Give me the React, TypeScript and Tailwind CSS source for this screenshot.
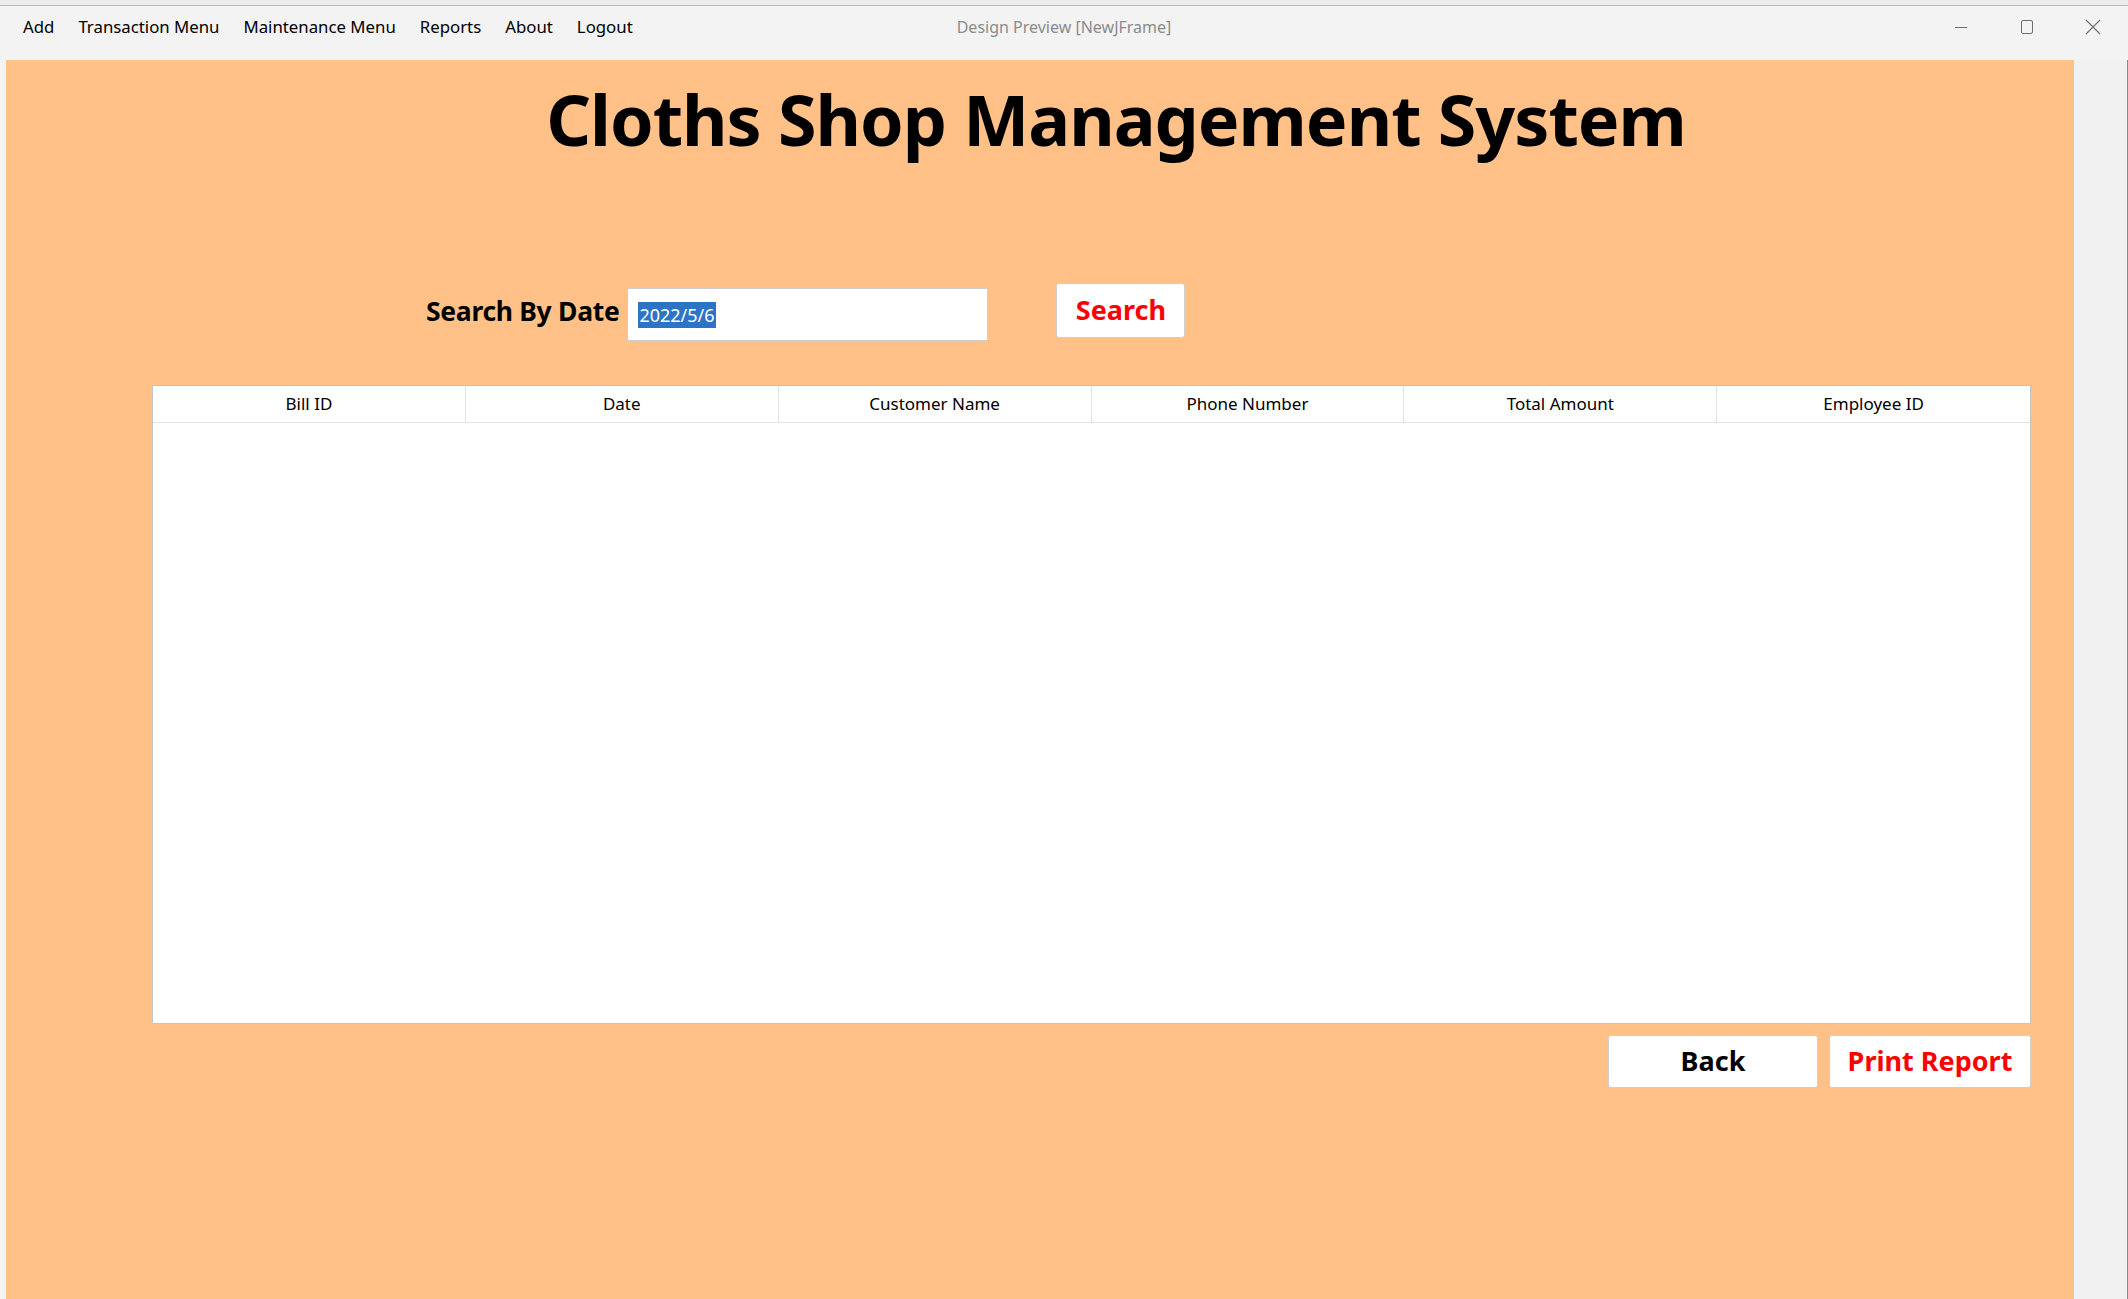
import React from 'react';

const menuItems = ['Add', 'Transaction Menu', 'Maintenance Menu', 'Reports', 'About', 'Logout'];
const columns = ['Bill ID', 'Date', 'Customer Name', 'Phone Number', 'Total Amount', 'Employee ID'];

const font = { fontFamily: '"Noto Sans", "Open Sans", Arial, sans-serif' };

export default function App() {
  return (
    <div className="w-[2128px] h-[1299px] overflow-hidden bg-[#f7f7f7] flex flex-col" style={font}>
      {/* strip of the window behind */}
      <div className="h-[6px] shrink-0 bg-[#ececec] border-b border-[#b9b9b9]" />

      {/* Title / menu bar */}
      <div className="h-[54px] shrink-0 bg-[#f3f3f3] flex items-start relative pt-[8px] pr-[2px]">
        <div className="flex items-center gap-[24px] pl-[23px] text-[16.8px] leading-[26px] text-black">
          {menuItems.map((m) => (
            <span key={m}>{m}</span>
          ))}
        </div>
        <div className="absolute left-0 right-0 top-[8px] h-[26px] flex items-center justify-center text-[16px] text-[#8b8b8b] pointer-events-none">
          Design Preview [NewJFrame]
        </div>
        <div className="ml-auto flex items-center h-[26px] text-[#6f6f6f]">
          <div className="w-[66px] flex justify-center">
            <svg width="16" height="16" viewBox="0 0 16 16"><path d="M2 8.5h12" stroke="currentColor" strokeWidth="1" /></svg>
          </div>
          <div className="w-[66px] flex justify-center">
            <svg width="16" height="16" viewBox="0 0 16 16"><rect x="2.5" y="1.5" width="11" height="13" rx="1.5" fill="none" stroke="currentColor" strokeWidth="1" /></svg>
          </div>
          <div className="w-[66px] flex justify-center">
            <svg width="18" height="18" viewBox="0 0 18 18"><path d="M2 2l14 14M16 2L2 16" stroke="currentColor" strokeWidth="1.1" /></svg>
          </div>
        </div>
      </div>

      {/* Body */}
      <div className="flex flex-1 min-h-0">
        <div className="w-[6px] shrink-0 bg-[#f3f3f3]" />
        <div className="w-[2068px] shrink-0 bg-[#ffc187] flex flex-col">
          {/* Heading */}
          <div className="flex justify-center pl-[152px] pt-[24px]">
            <h1 className="text-[70px] font-bold leading-none tracking-[-1px] text-black">Cloths Shop Management System</h1>
          </div>

          {/* Search */}
          <div className="flex items-center mt-[134px] pl-[420px]">
            <span className="mb-[6px] text-[26.5px] font-bold text-black tracking-[-0.3px]">Search By Date</span>
            <div className="ml-[8px] w-[361px] h-[53px] bg-white border border-[#cfcfcf] flex items-center px-[10px]">
              <span className="bg-[#2c75c6] text-white text-[18px] leading-[26px] px-[1px]">2022/5/6</span>
            </div>
            <button className="ml-[68px] -mt-[8px] w-[129px] h-[55px] bg-white border border-[#cfcfcf] rounded-[3px] text-[27px] font-bold text-[#ff0000]">
              Search
            </button>
          </div>

          {/* Table */}
          <div className="ml-[146px] mt-[44px] w-[1879px] h-[639px] bg-white border border-[#c4c4c4] flex flex-col">
            <div className="grid grid-cols-6 h-[37px] border-b border-[#e3e3e3]">
              {columns.map((c, i) => (
                <div
                  key={c}
                  className={`flex items-center justify-center text-[17px] text-black ${i < columns.length - 1 ? 'border-r border-[#e3e3e3]' : ''}`}
                >
                  {c}
                </div>
              ))}
            </div>
            <div className="flex-1" />
          </div>

          {/* Actions */}
          <div className="flex justify-end gap-[11px] mt-[11px] w-[2025px]">
            <button className="w-[210px] h-[53px] bg-white border border-[#cfcfcf] rounded-[3px] text-[27px] font-bold text-black">
              Back
            </button>
            <button className="w-[202px] h-[53px] bg-white border border-[#cfcfcf] rounded-[3px] text-[27px] font-bold text-[#ff0000]">
              Print Report
            </button>
          </div>
        </div>
        <div className="flex-1 bg-[#f1f1f1] border-r border-[#8a8a8a]" />
      </div>
    </div>
  );
}
